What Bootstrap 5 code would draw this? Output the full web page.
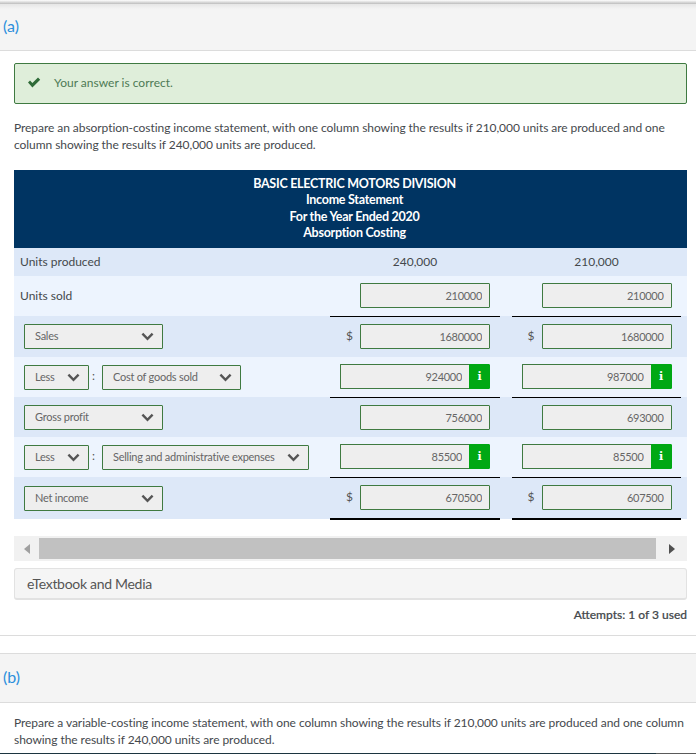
<!DOCTYPE html>
<html lang="en">
<head>
<meta charset="utf-8">
<title>Income Statement</title>
<link href="https://cdn.jsdelivr.net/npm/bootstrap@5.3.0/dist/css/bootstrap.min.css" rel="stylesheet">
<style>
html,body{height:754px;overflow:hidden}
body{font-family:Lato,"Liberation Sans",sans-serif;font-size:13px;color:#4d5156;background:#fff;width:696px}
.topshade{height:4px;background:linear-gradient(#fff,#bdbdbd)}
.parthead{background:#f4f4f4;border-bottom:1px solid #dcdcdc;color:#2b8fdc;font-size:16px;padding-left:3px;display:flex;align-items:center}
.parta{height:47px;padding-bottom:2px;background:linear-gradient(#e6e6e6,#f4f4f4 5px)}
.partb{height:50px;border-top:1px solid #dcdcdc;margin-top:17px;padding-bottom:2px}
.sect{padding:0 9px 0 14px}
.okbox{height:41px;margin:12px 0 0;padding:0 0 2px 12px;background:#dfeeda;border:1px solid #3f7a41;border-radius:2px;color:#4e7a55;font-size:12px;gap:13px}
.prompt{font-size:12px;line-height:17px;margin:15px 0 17px;color:#45494d;letter-spacing:-.06px}
.stmt{table-layout:fixed;width:673px;margin:0;border-collapse:collapse;font-size:12px}
.stmt td,.stmt th{padding:0;border:0;color:#44484c;background:transparent;box-shadow:none;vertical-align:middle}
.stmt thead th{background:#003462;color:#fff;text-align:center;font-size:12.5px;font-weight:700;line-height:16.5px;padding:5.5px 0 6.5px 8px;letter-spacing:-.27px}
.rowa td{background:#dde8f8}
.rowb td{background:#edf4fe}
.stmt .lbl{padding-left:6px}
.stmt .lbl10{padding-left:10px}
.h28{height:28px}.h40{height:40px}.h41{height:41px}.h42{height:42px}
.stmt .numc{text-align:center}
.cellbox{display:flex;justify-content:flex-end;align-items:center;padding-right:10px}
.cell2{padding-right:9.5px}
.stmt td.rule1{border-bottom:1px solid #000}
.stmt td.rule2{border-bottom:2px solid #000}
.dollar{margin-right:7px;font-size:12px;color:#555;margin-top:-2px}
.ansin,.ansin:disabled{width:130px;height:25px;min-height:25px;flex:none;padding:0 7px 0 4px;border:1px solid #3f7a41;border-radius:1px;background:#eee;color:#666;font-size:11px;text-align:right;font-family:inherit;letter-spacing:-.3px;opacity:1}
.withinfo{width:150px;flex:none;flex-wrap:nowrap}
.withinfo .ansin,.withinfo .ansin:disabled{width:129px;flex:1 1 auto;border-right:0;border-radius:1px 0 0 1px;padding-right:8px}
.infobtn{width:21px;height:25px;background:#00a814;color:#fff;border:1px solid #00a814;border-radius:0 1px 1px 0;padding:0;font:700 11px "DejaVu Serif",serif;display:flex;align-items:center;justify-content:center}
.pick{height:25px;min-height:25px;padding:0 20px 2px 10px;border:1px solid #3f7a41;border-radius:1px;background-color:#eee;color:#666;font-size:11px;line-height:21px;font-family:inherit;letter-spacing:-.25px;background-image:url("data:image/svg+xml,%3csvg xmlns='http://www.w3.org/2000/svg' viewBox='0 0 14 14'%3e%3cpath fill='none' stroke='%23555' stroke-width='2.6' d='M1.5 4 7 9.5 12.5 4'/%3e%3c/svg%3e");background-position:right 8px center;background-size:13px 13px;flex:none}
.pick:disabled{background-color:#eee;opacity:1;color:#666}
.w139{width:139px}.w65{width:65px}.w207{width:207px}
.colon{width:13px;padding-left:3px;color:#555;font-size:12px;flex:none;margin-top:-3px}
.fakebar{height:25px;width:673px;margin-top:16px;background:#f1f1f1;align-items:center}
.barcap{width:25px;height:100%;display:flex;align-items:center;justify-content:center;flex:none}
.barthumb{height:21px;flex:1;background:#c1c1c1}
.barcap2{width:31px;padding-left:1px}
.tri{width:0;height:0;border-top:5.5px solid transparent;border-bottom:5.5px solid transparent}
.trileft{border-right:6px solid #a0a0a0}
.triright{border-left:6px solid #505050}
.mediabox{width:673px;height:32px;margin-top:7px;padding-left:12px;background:#f5f5f5;border:1px solid #e2e2e2;border-bottom-width:2px;border-radius:3px;color:#555;font-size:14px;letter-spacing:-.3px;display:flex;align-items:center}
.tries{width:673px;text-align:right;font-size:12px;font-weight:500;color:#45494d;margin-top:6px;height:18px;line-height:17px;-webkit-text-stroke:.2px #45494d}
.endline{border-bottom:1px solid #dcdcdc;height:12px}
.prompt2{margin:11px 0 0;font-size:12px;line-height:17px;color:#45494d;letter-spacing:-.06px;height:39px}
.basebar{height:2px}
.basea{flex:1;background:#1c3540}
.baseb{width:40px;background:#5a5a5a}
</style>
</head>
<body>
<div class="topshade"></div>
<div class="parthead parta">(a)</div>
<div class="sect">
  <div class="alert okbox d-flex align-items-center" role="alert">
    <svg width="14" height="11" viewBox="0 0 14 11" aria-hidden="true"><path d="M1 5.6 3 3.6 5.4 6 11 .6 13.2 2.7 5.4 10.4Z" fill="#2f6b38"/></svg>
    <span>Your answer is correct.</span>
  </div>
  <p class="prompt">Prepare an absorption-costing income statement, with one column showing the results if 210,000 units are produced and one column showing the results if 240,000 units are produced.</p>
  <table class="table stmt">
    <colgroup><col style="width:316px"><col style="width:170px"><col style="width:12px"><col style="width:169px"><col style="width:6px"></colgroup>
    <thead><tr><th colspan="5">BASIC ELECTRIC MOTORS DIVISION<br>Income Statement<br>For the Year Ended 2020<br>Absorption Costing</th></tr></thead>
    <tbody>
      <tr class="rowa h28"><td class="lbl">Units produced</td><td class="numc">240,000</td><td></td><td class="numc">210,000</td><td></td></tr>
      <tr class="rowb h40"><td class="lbl">Units sold</td>
        <td class="rule1"><div class="cellbox"><input class="form-control ansin" value="210000" disabled></div></td><td></td>
        <td class="rule1"><div class="cellbox cell2"><input class="form-control ansin" value="210000" disabled></div></td><td></td></tr>
      <tr class="rowa h41"><td class="lbl10"><select class="form-select pick w139" disabled><option>Sales</option></select></td>
        <td><div class="cellbox"><span class="dollar">$</span><input class="form-control ansin" value="1680000" disabled></div></td><td></td>
        <td><div class="cellbox cell2"><span class="dollar">$</span><input class="form-control ansin" value="1680000" disabled></div></td><td></td></tr>
      <tr class="rowb h40"><td class="lbl10"><div class="d-flex align-items-center"><select class="form-select pick w65" disabled><option>Less</option></select><span class="colon">:</span><select class="form-select pick w139" disabled><option>Cost of goods sold</option></select></div></td>
        <td class="rule1"><div class="cellbox"><div class="input-group withinfo"><input class="form-control ansin" value="924000" disabled><button class="btn infobtn" type="button">i</button></div></div></td><td></td>
        <td class="rule1"><div class="cellbox cell2"><div class="input-group withinfo"><input class="form-control ansin" value="987000" disabled><button class="btn infobtn" type="button">i</button></div></div></td><td></td></tr>
      <tr class="rowa h40"><td class="lbl10"><select class="form-select pick w139" disabled><option>Gross profit</option></select></td>
        <td><div class="cellbox"><input class="form-control ansin" value="756000" disabled></div></td><td></td>
        <td><div class="cellbox cell2"><input class="form-control ansin" value="693000" disabled></div></td><td></td></tr>
      <tr class="rowb h40"><td class="lbl10"><div class="d-flex align-items-center"><select class="form-select pick w65" disabled><option>Less</option></select><span class="colon">:</span><select class="form-select pick w207" disabled><option>Selling and administrative expenses</option></select></div></td>
        <td class="rule1"><div class="cellbox"><div class="input-group withinfo"><input class="form-control ansin" value="85500" disabled><button class="btn infobtn" type="button">i</button></div></div></td><td></td>
        <td class="rule1"><div class="cellbox cell2"><div class="input-group withinfo"><input class="form-control ansin" value="85500" disabled><button class="btn infobtn" type="button">i</button></div></div></td><td></td></tr>
      <tr class="rowa h42"><td class="lbl10"><select class="form-select pick w139" disabled><option>Net income</option></select></td>
        <td class="rule2"><div class="cellbox"><span class="dollar">$</span><input class="form-control ansin" value="670500" disabled></div></td><td></td>
        <td class="rule2"><div class="cellbox cell2"><span class="dollar">$</span><input class="form-control ansin" value="607500" disabled></div></td><td></td></tr>
    </tbody>
  </table>
  <div class="fakebar d-flex">
    <div class="barcap"><span class="tri trileft"></span></div>
    <div class="barthumb"></div>
    <div class="barcap barcap2"><span class="tri triright"></span></div>
  </div>
  <div class="mediabox">eTextbook and Media</div>
  <div class="tries">Attempts: 1 of 3 used</div>
</div>
<div class="endline"></div>
<div class="parthead partb">(b)</div>
<div class="sect">
  <p class="prompt2">Prepare a variable-costing income statement, with one column showing the results if 210,000 units are produced and one column showing the results if 240,000 units are produced.</p>
</div>
<div class="basebar d-flex"><div class="basea"></div><div class="baseb"></div></div>
<script src="https://cdn.jsdelivr.net/npm/bootstrap@5.3.0/dist/js/bootstrap.bundle.min.js"></script>
</body>
</html>
